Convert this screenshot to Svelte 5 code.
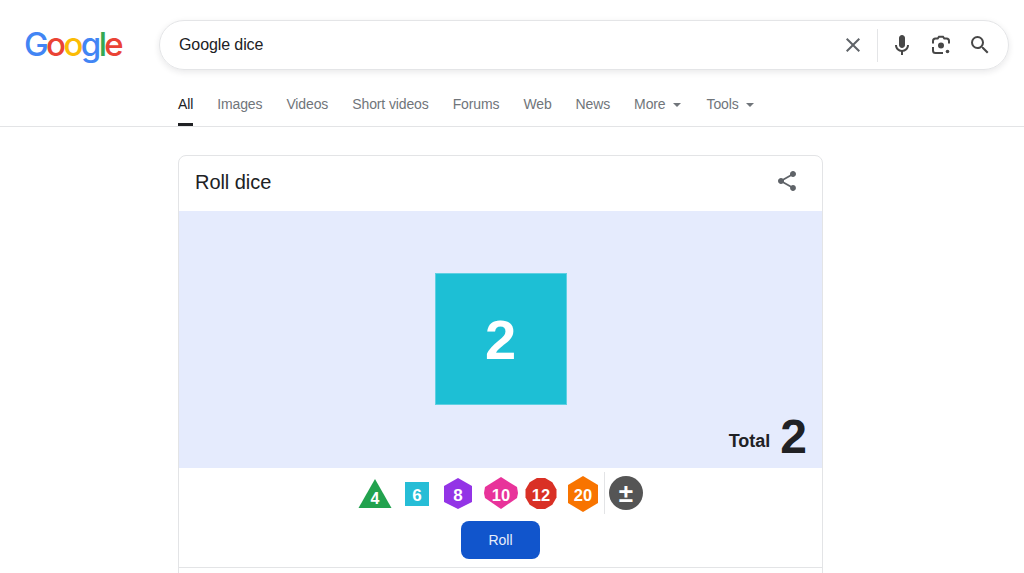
<script>
	const tabs = ['All', 'Images', 'Videos', 'Short videos', 'Forums', 'Web', 'News'];
	const dice = [
		{ label: '4', fill: '#22a24e', points: '16,2 32.5,31 -0.5,31', y: 27, size: 16 },
		{ label: '6', fill: '#26bdd6', points: '4,5 28,5 28,29 4,29', y: 24, size: 17 },
		{ label: '8', fill: '#9334e6', points: '16,1 30,9 30,25 16,32 2,25 2,9', y: 24, size: 17 },
		{ label: '10', fill: '#e8339a', points: '17,0 33,10 34,16 33,21 17,32 1,21 0,16 1,10', x: 17, y: 24, size: 16.5 },
		{ label: '12', fill: '#d93025', points: '31.5,12.4 27.3,5.2 20.1,1 11.9,1 4.7,5.2 0.5,12.4 0.5,20.6 4.7,27.8 11.9,32 20.1,32 27.3,27.8 31.5,20.6', y: 24, size: 16.5 },
		{ label: '20', fill: '#f87400', points: '16,-1 31,8 31,26 16,35 1,26 1,8', y: 24, size: 16.5 }
	];
</script>

<div class="page">
	<header class="top">
		<div class="logo" aria-label="Google">
			<span class="blue">G</span><span class="red">o</span><span class="yellow">o</span><span class="blue">g</span><span class="green">l</span><span class="red">e</span>
		</div>
		<div class="search">
			<span class="query">Google dice</span>
			<div class="search-icons">
				<svg class="clear" width="24" height="24" viewBox="0 0 24 24" fill="#5f6368">
					<path d="M19 6.41L17.59 5 12 10.59 6.41 5 5 6.41 10.59 12 5 17.59 6.41 19 12 13.41 17.59 19 19 17.59 13.41 12z" />
				</svg>
				<span class="sep"></span>
				<svg width="24" height="24" viewBox="0 0 24 24" fill="#474747">
					<path d="M12 15c1.66 0 3-1.31 3-2.97V5.01C15 3.35 13.66 2 12 2S9 3.34 9 5.01v7.02C9 13.69 10.34 15 12 15z" />
					<path d="M11 18h2v4h-2z" />
					<path d="M5 12h2c0 2.8 2.2 4.900 5 4.900s5-2.100 5-4.900h2c0 3.900-3.100 7-7 7s-7-3.100-7-7z" />
				</svg>
				<svg width="24" height="24" viewBox="0 0 24 24" fill="none" stroke="#474747" stroke-width="2">
					<path d="M4 10.500V8a2.500 2.500 0 0 1 2.500-2.500h2.200L10 3.700h4l1.300 1.800h2.200A2.500 2.500 0 0 1 20 8v2.500" />
					<path d="M4 14v3.500A2.500 2.500 0 0 0 6.500 20H14" />
					<circle cx="12" cy="12.500" r="3" fill="#474747" stroke="none" />
					<circle cx="18.500" cy="18.500" r="1.800" fill="#474747" stroke="none" />
				</svg>
				<svg width="24" height="24" viewBox="0 0 24 24" fill="#474747">
					<path d="M15.500 14h-.79l-.28-.27A6.471 6.471 0 0 0 16 9.500 6.500 6.500 0 1 0 9.500 16c1.610 0 3.090-.59 4.230-1.570l.27.28v.79l5 4.990L20.490 19l-4.990-5zm-6 0C7.010 14 5 11.990 5 9.500S7.010 5 9.500 5 14 7.010 14 9.500 11.990 14 9.500 14z" />
				</svg>
			</div>
		</div>
	</header>

	<nav class="tabs">
		{#each tabs as tab, i}
			<span class="tab" class:active={i === 0}>{tab}</span>
		{/each}
		<span class="tab menu">More <i class="caret"></i></span>
		<span class="tab menu">Tools <i class="caret"></i></span>
	</nav>

	<main class="card">
		<div class="card-head">
			<h2>Roll dice</h2>
			<svg class="share" width="24" height="24" viewBox="0 0 24 24" fill="#5f6368">
				<path d="M18 16.080c-.76 0-1.440.3-1.960.77L8.910 12.700c.05-.23.09-.46.09-.7s-.04-.47-.09-.7l7.050-4.110c.54.5 1.250.81 2.040.81 1.660 0 3-1.340 3-3s-1.340-3-3-3-3 1.340-3 3c0 .24.04.47.09.7L8.040 9.810C7.500 9.310 6.790 9 6 9c-1.660 0-3 1.340-3 3s1.340 3 3 3c.79 0 1.500-.31 2.040-.81l7.120 4.160c-.05.21-.08.43-.08.65 0 1.610 1.310 2.920 2.920 2.920 1.610 0 2.920-1.310 2.920-2.920s-1.310-2.920-2.920-2.920z" />
			</svg>
		</div>

		<div class="stage">
			<div class="big-die">2</div>
			<div class="total">
				<span class="total-label">Total</span>
				<span class="total-value">2</span>
			</div>
		</div>

		<div class="controls">
			<div class="dice-row">
				{#each dice as d}
					<div class="die-cell">
						<svg width="34" height="36" viewBox="-1 -2 34 36" overflow="visible">
							<polygon points={d.points} fill={d.fill} />
							<text x={d.x ?? 16} y={d.y} font-size={d.size} text-anchor="middle">{d.label}</text>
						</svg>
					</div>
				{/each}
				<div class="plus-cell">
					<span class="plus">±</span>
				</div>
			</div>
			<button class="roll">Roll</button>
		</div>
		<div class="next"></div>
	</main>
</div>

<style>
	:global(body) {
		margin: 0;
		background: #fff;
		overflow: hidden;
	}

	.page {
		height: 573px;
		overflow: hidden;
		font-family: 'Liberation Sans', Arial, sans-serif;
		color: #202124;
	}

	.top {
		display: flex;
		align-items: center;
		height: 50px;
		padding: 20px 15px 0 24px;
	}

	.logo {
		width: 135px;
		font-family: Inter, 'Noto Sans', sans-serif;
		font-size: 33px;
		font-weight: 500;
		line-height: 50px;
		letter-spacing: -2.6px;
		margin-top: -3px;
	}

	.blue { color: #4285f4; }
	.red { color: #ea4335; }
	.yellow { color: #fbbc05; }
	.green { color: #34a853; }

	.search {
		flex: 1;
		height: 50px;
		box-sizing: border-box;
		display: flex;
		align-items: center;
		justify-content: space-between;
		padding: 0 16px 0 19px;
		border: 1px solid #e4e5e7;
		border-radius: 25px;
		box-shadow: 0 2px 6px rgba(32, 33, 36, 0.1);
	}

	.query {
		font-size: 16px;
		letter-spacing: -0.1px;
		color: #202124;
	}

	.search-icons {
		display: flex;
		align-items: center;
		gap: 15px;
	}

	.sep {
		width: 1px;
		height: 33px;
		background: #e4e5e7;
		margin: 0 -3px;
	}

	.tabs {
		display: flex;
		gap: 24px;
		height: 57px;
		box-sizing: border-box;
		padding-left: 178px;
		border-bottom: 1px solid #e3e4e6;
	}

	.tab {
		height: 56px;
		box-sizing: border-box;
		padding-top: 26px;
		font-size: 14px;
		line-height: 16px;
		letter-spacing: -0.12px;
		color: #70757a;
	}

	.tab.active {
		color: #202124;
		border-bottom: 3px solid #202124;
	}

	.tab.menu {
		display: flex;
		gap: 7px;
		align-items: flex-start;
		margin-right: 2px;
	}

	.caret {
		margin-top: 7px;
		width: 0;
		height: 0;
		border-left: 4px solid transparent;
		border-right: 4px solid transparent;
		border-top: 4px solid #70757a;
	}

	.card {
		width: 645px;
		box-sizing: border-box;
		margin: 28px 0 0 178px;
		border: 1px solid #e3e4e6;
		border-radius: 8px;
		overflow: hidden;
	}

	.card-head {
		height: 55px;
		box-sizing: border-box;
		padding: 0 23px 3px 16px;
		display: flex;
		align-items: center;
		justify-content: space-between;
	}

	.share {
		margin-top: -3px;
	}

	h2 {
		margin: 0;
		font-size: 20px;
		font-weight: 400;
		letter-spacing: -0.05px;
		color: #202124;
	}

	.stage {
		position: relative;
		height: 257px;
		display: flex;
		align-items: center;
		justify-content: center;
		background: #e5ebfd;
	}

	.big-die {
		width: 132px;
		height: 132px;
		margin-top: -1px;
		display: flex;
		align-items: center;
		justify-content: center;
		background: #1dbfd5;
		box-shadow: inset 0 0 0 1px #5fd0e2;
		color: #fff;
		font-size: 56px;
		font-weight: 700;
	}

	.total {
		position: absolute;
		right: 15px;
		bottom: 4px;
		display: flex;
		align-items: center;
		gap: 10px;
	}

	.total-label {
		font-size: 18px;
		font-weight: 700;
		margin-top: 8px;
	}

	.total-value {
		font-size: 48px;
		font-weight: 700;
		line-height: 54px;
	}

	.controls {
		height: 99px;
		display: flex;
		flex-direction: column;
		align-items: center;
		border-bottom: 1px solid #e3e4e6;
	}

	.dice-row {
		display: flex;
		align-items: center;
		height: 49px;
	}

	.die-cell {
		width: 41.6px;
		display: flex;
		justify-content: center;
	}

	.die-cell text {
		fill: #fff;
		font-family: 'Liberation Sans', Arial, sans-serif;
		font-weight: 700;
	}

	.plus-cell {
		width: 42px;
		height: 42px;
		margin-top: 1px;
		display: flex;
		align-items: center;
		justify-content: center;
		border-left: 1px solid #e3e4e6;
	}

	.plus {
		width: 34px;
		height: 34px;
		border-radius: 50%;
		background: #555;
		color: #fff;
		display: flex;
		align-items: center;
		justify-content: center;
		font-size: 26px;
		font-weight: 700;
	}

	.roll {
		width: 79px;
		height: 38px;
		margin-top: 4px;
		border: none;
		border-radius: 8px;
		background: #1155cc;
		color: #e8eefb;
		font-family: inherit;
		font-size: 14px;
	}

	.next {
		height: 40px;
	}
</style>
